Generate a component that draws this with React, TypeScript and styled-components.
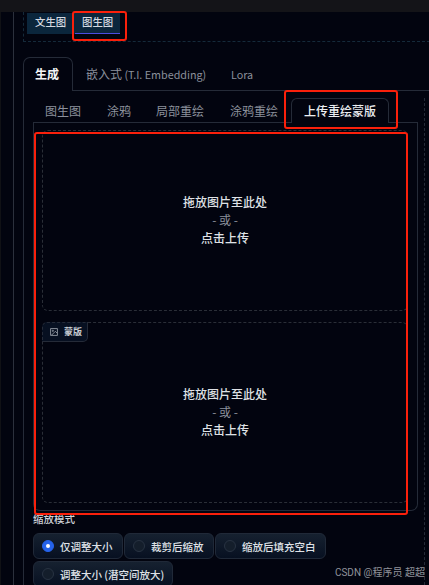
import React from 'react';
import styled, { createGlobalStyle } from 'styled-components';

const GlobalStyle = createGlobalStyle`
  *, *::before, *::after { box-sizing: border-box; }
  html, body { margin: 0; background: #02040f; overflow: hidden; }
  body { font-family: "Noto Sans CJK SC", "Noto Sans", sans-serif; }
`;

const line = '#252b38';

const Window = styled.div`
  position: relative;
  width: 429px;
  height: 585px;
  overflow: hidden;
  display: flex;
  flex-direction: column;
  background: #02040f;
  color: #e5e7eb;
  white-space: nowrap;
`;

const TopBar = styled.div`
  height: 12px;
  flex: none;
  background: #141418;
`;

const Content = styled.div`
  flex: 1;
  display: flex;
  border-left: 1px solid #101115;
`;

const Gutter = styled.div`
  flex: none;
  width: 13px;
  border-right: 1px solid #2b303c;
`;

const Main = styled.main`
  flex: none;
  width: 416px;
  padding-left: 9px;
`;

const ModeBar = styled.nav`
  display: flex;
  align-items: flex-start;
  height: 30px;
  padding: 1px 0 0 3px;
  border: dashed #152a3a;
  border-width: 0 0 1px 1px;
`;

const ModeTab = styled.button<{ $active?: boolean }>`
  width: ${p => (p.$active ? 45 : 48)}px;
  height: 21px;
  padding: 0 0 0 ${p => (p.$active ? 7 : 8)}px;
  border: 0;
  border-bottom: 1px solid ${p => (p.$active ? '#4a4de0' : '#0b263c')};
  background: #0b263c;
  color: #d5dae1;
  font: 500 10.4px/18px "Noto Sans CJK SC", sans-serif;
  text-align: left;

  display: flex;
  align-items: flex-start;
`;

const PanelTabs = styled.div`
  display: flex;
  height: 34px;
  margin-top: 15px;
`;

const PanelTab = styled.div<{ $width?: number; $active?: boolean }>`
  width: ${p => (p.$width ? `${p.$width}px` : 'auto')};
  flex: ${p => (p.$width ? 'none' : 1)};
  padding-left: ${p => (p.$active ? 11 : 13)}px;
  border: 0 solid ${line};
  border-width: ${p => (p.$active ? '1px 1px 0 1px' : '0 0 1px 0')};
  border-radius: ${p => (p.$active ? '7px 7px 0 0' : '0')};
  color: ${p => (p.$active ? '#f3f4f6' : '#8b909b')};
  font-size: 12px;
  font-weight: ${p => (p.$active ? 600 : 400)};
  line-height: ${p => (p.$active ? 32 : 34)}px;
`;

const Latin = styled.span`
  font-size: 10.75px;
`;

const Panel = styled.section`
  display: flex;
  height: 494px;
  border-left: 1px solid ${line};
  padding: 7px 0 0 9px;
`;

const Column = styled.div`
  width: 392px;
  flex: none;
  height: 487px;
  border-right: 1px dashed ${line};
`;

const ToolTabs = styled.div`
  display: flex;
  width: 385px;
  height: 25px;
`;

const ToolTab = styled.div<{ $width: number; $active?: boolean }>`
  flex: none;
  width: ${p => p.$width}px;
  height: 25px;
  padding-left: 12px;
  border: 0 solid ${line};
  border-width: ${p => (p.$active ? '1px 1px 0' : '0 0 1px')};
  border-radius: ${p => (p.$active ? '6px 6px 0 0' : '0')};
  color: ${p => (p.$active ? '#eceef1' : '#8b909b')};
  font-size: 12px;
  font-weight: ${p => (p.$active ? 500 : 400)};
  line-height: ${p => (p.$active ? 24 : 26)}px;
`;

const UploadPanel = styled.div`
  width: 385px;
  height: 388px;
  padding: 7px 9px 0 8px;
  display: flex;
  flex-direction: column;
  gap: 11px;
  border: 1px solid ${line};
  border-top: 0;
  border-radius: 0 0 7px 7px;
`;

const DropZone = styled.div`
  position: relative;
  display: flex;
  flex: none;
  height: 181px;
  padding-bottom: 2px;
  flex-direction: column;
  align-items: center;
  justify-content: center;
  border: 1px dashed #2a2e37;
  border-radius: 6px;
  font-size: 12px;
  font-weight: 500;
  line-height: 18px;
  color: #dfe1e5;
`;

const Or = styled.span`
  color: #8b909b;
  font-weight: 400;
`;

const Badge = styled.div`
  position: absolute;
  top: -1px;
  left: -1px;
  width: 46px;
  height: 20px;
  padding-left: 7px;
  display: flex;
  align-items: center;
  gap: 6px;
  background: #071021;
  border: 1px solid ${line};
  border-top-style: dashed;
  border-left-style: dashed;
  border-radius: 5px 0 5px 0;
  font-size: 9px;
  font-weight: 600;
  color: #c9cdd4;
`;

const Label = styled.div`
  height: 18px;
  margin-top: -1px;
  color: #cfd2d8;
  font-size: 10.5px;
  font-weight: 500;
  line-height: 17px;
`;

const Options = styled.div`
  display: flex;
  flex-wrap: wrap;
  gap: 2px 1px;
  width: 385px;
  margin-top: 5px;
`;

const Option = styled.label<{ $width: number }>`
  display: flex;
  align-items: center;
  gap: 6px;
  width: ${p => p.$width}px;
  height: 26px;
  padding-left: 8px;
  border: 1px solid #202938;
  border-radius: 6px;
  background: linear-gradient(#162130, #071021);
  color: #dfe2e7;
  font-size: 10.5px;
  font-weight: 500;
`;

const Radio = styled.span<{ $checked?: boolean }>`
  flex: none;
  display: grid;
  place-items: center;
  width: 12px;
  height: 12px;
  border: 1px solid ${p => (p.$checked ? '#2563eb' : '#283342')};
  border-radius: 50%;
  background: ${p => (p.$checked ? '#2563eb' : '#141e2b')};
  &::after {
    content: "";
    width: 4px;
    height: 4px;
    border-radius: 50%;
    background: ${p => (p.$checked ? '#fff' : 'transparent')};
  }
`;

const Highlight = styled.div<{ $x: number; $y: number; $w: number; $h: number }>`
  position: absolute;
  left: ${p => p.$x}px;
  top: ${p => p.$y}px;
  width: ${p => p.$w}px;
  height: ${p => p.$h}px;
  border: 2px solid #fa200b;
  border-radius: 3px;
  pointer-events: none;
`;

const Watermark = styled.div`
  position: absolute;
  right: 4px;
  bottom: 5px;
  color: #90929a;
  font: 10px/14px Roboto, "Noto Sans CJK SC", sans-serif;
`;

const ImageIcon = () => (
  <svg width="8" height="8" viewBox="0 0 24 24" fill="none" stroke="#a6abb5" strokeWidth="2.4">
    <rect x="2" y="2" width="20" height="20" />
    <circle cx="8.5" cy="8.5" r="1.8" />
    <path d="M21 15l-5-5L5 21" />
  </svg>
);

const toolTabs = [
  { name: '图生图', width: 62 },
  { name: '涂鸦', width: 49 },
  { name: '局部重绘', width: 74 },
  { name: '涂鸦重绘', width: 73 },
  { name: '上传重绘蒙版', width: 98, active: true },
  { name: '', width: 29 },
];

const options = [
  { name: '仅调整大小', width: 90, checked: true },
  { name: '裁剪后缩放', width: 90 },
  { name: '缩放后填充空白', width: 111 },
  { name: '调整大小 (潜空间放大)', width: 140 },
];

const DropText = () => (
  <>
    <span>拖放图片至此处</span>
    <Or>- 或 -</Or>
    <span>点击上传</span>
  </>
);

export default function App() {
  return (
    <>
      <GlobalStyle />
      <Window>
        <TopBar />
        <Content>
          <Gutter />
          <Main>
            <ModeBar>
              <ModeTab>文生图</ModeTab>
              <ModeTab $active>图生图</ModeTab>
            </ModeBar>
            <PanelTabs>
              <PanelTab $width={50} $active>生成</PanelTab>
              <PanelTab $width={145}>嵌入式<Latin> (T.I. Embedding)</Latin></PanelTab>
              <PanelTab><Latin>Lora</Latin></PanelTab>
            </PanelTabs>
            <Panel>
              <Column>
                <ToolTabs>
                  {toolTabs.map(t => (
                    <ToolTab key={t.width} $width={t.width} $active={t.active}>{t.name}</ToolTab>
                  ))}
                </ToolTabs>
                <UploadPanel>
                  <DropZone><DropText /></DropZone>
                  <DropZone>
                    <Badge><ImageIcon />蒙版</Badge>
                    <DropText />
                  </DropZone>
                </UploadPanel>
                <Label>缩放模式</Label>
                <Options>
                  {options.map(o => (
                    <Option key={o.name} $width={o.width}>
                      <Radio $checked={o.checked} />
                      {o.name}
                    </Option>
                  ))}
                </Options>
              </Column>
            </Panel>
          </Main>
        </Content>
        <Highlight $x={72} $y={11} $w={55} $h={30} />
        <Highlight $x={284} $y={90} $w={114} $h={39} />
        <Highlight $x={34} $y={132} $w={374} $h={383} />
        <Watermark>CSDN @程序员 超超</Watermark>
      </Window>
    </>
  );
}
